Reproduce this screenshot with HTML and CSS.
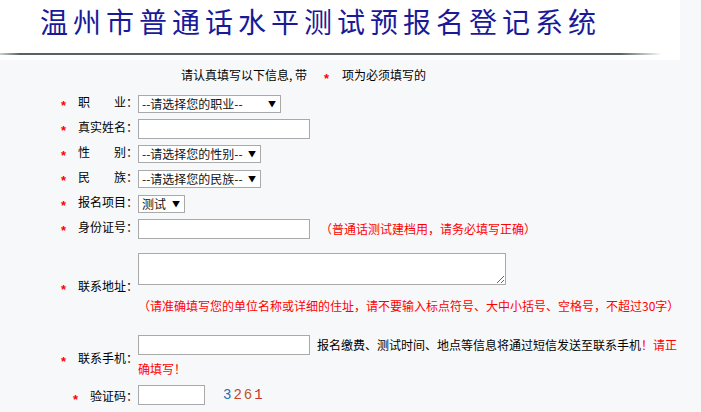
FILE: index.html
```html
<!DOCTYPE html>
<html lang="zh">
<head>
  <meta charset="UTF-8">
  <title>温州市普通话水平测试预报名登记系统</title>
  <link rel="stylesheet" href="styles.css">
</head>
<body>
  <div class="header">
    <h1>温州市普通话水平测试预报名登记系统</h1>
    <div class="rule"></div>
  </div>

  <p class="intro">请认真填写以下信息, 带<span class="star">*</span>项为必须填写的</p>

  <form class="form">
    <div class="label"><span class="star">*</span>职　　业：</div>
    <div class="field">
      <span class="sel w143">
        <select name="job"><option>--请选择您的职业--</option></select>
      </span>
    </div>

    <div class="label"><span class="star">*</span>真实姓名：</div>
    <div class="field"><input type="text" class="txt" name="name"></div>

    <div class="label"><span class="star">*</span>性　　别：</div>
    <div class="field">
      <span class="sel w123">
        <select name="sex"><option>--请选择您的性别--</option></select>
      </span>
    </div>

    <div class="label"><span class="star">*</span>民　　族：</div>
    <div class="field">
      <span class="sel w123">
        <select name="nation"><option>--请选择您的民族--</option></select>
      </span>
    </div>

    <div class="label"><span class="star">*</span>报名项目：</div>
    <div class="field">
      <span class="sel w47">
        <select name="item"><option>测试</option></select>
      </span>
    </div>

    <div class="label"><span class="star">*</span>身份证号：</div>
    <div class="field">
      <input type="text" class="txt" name="idcard"><span class="tip">（普通话测试建档用，请务必填写正确）</span>
    </div>

    <div class="label bottom"><span class="star">*</span>联系地址：</div>
    <div class="field area-row"><textarea name="address"></textarea></div>

    <div class="label"></div>
    <div class="field note">（请准确填写您的单位名称或详细的住址，请不要输入标点符号、大中小括号、空格号，不超过30字）</div>

    <div class="label low"><span class="star">*</span>联系手机：</div>
    <div class="field phone">
      <input type="text" class="txt" name="mobile">报名缴费、测试时间、地点等信息将通过短信发送至联系手机<span class="red">！请正确填写！</span>
    </div>

    <div class="label low"><span class="star">*</span>验证码：</div>
    <div class="field code-row">
      <input type="text" class="txt short" name="code"><span class="code"><i class="c1">3</i><i class="c2">2</i><i class="c3">6</i><i class="c4">1</i></span>
    </div>
  </form>
</body>
</html>
```

FILE: styles.css
```css
body {
  margin: 0;
  background-color: #f7f8fa;
  font-family: "Noto Sans CJK SC", sans-serif;
  font-size: 12px;
  color: #000;
}
.header {
  width: 680px;
  height: 60px;
  background-color: #fff;
}
.header h1 {
  margin: 0;
  padding-left: 40px;
  font-size: 28px;
  font-weight: normal;
  line-height: 42px;
  letter-spacing: 5px;
  color: #1a1a98;
}
.rule {
  height: 2px;
  margin-top: 11px;
  width: 662px;
  background: linear-gradient(to right, #c9d1cd 0, #56645f 20px, #56645f 620px, rgba(86,100,95,0) 662px);
}
.intro {
  margin: 6px 0 0;
  padding-left: 181px;
  line-height: 18px;
}
.intro .star {
  margin: 0 13px 0 17px;
}
.star {
  color: #f00;
  font-family: "Liberation Sans", sans-serif;
  font-weight: bold;
  font-size: 13px;
  vertical-align: -3px;
  margin-right: 12px;
}
.form {
  display: grid;
  grid-template-columns: 138px 548px;
  grid-auto-rows: minmax(25px, auto);
  align-items: center;
  margin-top: 3px;
}
.label {
  text-align: right;
  white-space: nowrap;
  line-height: 18px;
}
.label.bottom {
  align-self: end;
  margin-bottom: -2px;
}
.label.low {
  padding-top: 5px;
}
.field {
  line-height: 18px;
}
.sel {
  position: relative;
  display: inline-block;
  vertical-align: middle;
}
.sel select {
  -webkit-appearance: none;
  appearance: none;
  width: 100%;
  height: 18px;
  margin: 0;
  padding: 0 0 0 3px;
  border: 1px solid #a9a9a9;
  border-radius: 0;
  background-color: #fff;
  font-family: "Noto Sans CJK SC", sans-serif;
  font-size: 12px;
  line-height: 16px;
  color: #111;
  display: block;
}
.sel::after {
  content: "▼";
  position: absolute;
  right: 5px;
  top: 4px;
  font-size: 8px;
  line-height: 9px;
  color: #000;
  pointer-events: none;
}
.w143 { width: 143px; }
.w123 { width: 123px; }
.w47 { width: 47px; }
.txt {
  box-sizing: border-box;
  width: 172px;
  height: 20px;
  margin: 0;
  padding: 1px 3px;
  border: 1px solid #a9a9a9;
  background-color: #fff;
  vertical-align: middle;
  font-size: 12px;
}
.txt.short {
  width: 67px;
}
.tip {
  color: #f00;
  margin-left: 10px;
  vertical-align: middle;
}
.area-row {
  height: 56px;
  align-self: start;
}
.area-row textarea {
  display: block;
  box-sizing: border-box;
  width: 368px;
  height: 32px;
  margin: 12px 0 0;
  border: 1px solid #a9a9a9;
  background-color: #fff;
}
.note {
  color: #f00;
  align-self: start;
  padding-bottom: 18px;
}
.phone {
  line-height: 24px;
  padding: 0;
}
.phone .txt {
  vertical-align: top;
  margin: 2px 7px 0 0;
}
.red {
  color: #f00;
}
.code-row {
  height: 28px;
  display: flex;
  align-items: center;
}
.code {
  margin-left: 18px;
  font-family: "Liberation Mono", monospace;
  font-size: 14px;
  letter-spacing: 2px;
}
.code i {
  font-style: normal;
}
.c1 { color: #1f6fb0; }
.c2 { color: #c8441a; }
.c3 { color: #b8581e; }
.c4 { color: #c62f2f; }
```
